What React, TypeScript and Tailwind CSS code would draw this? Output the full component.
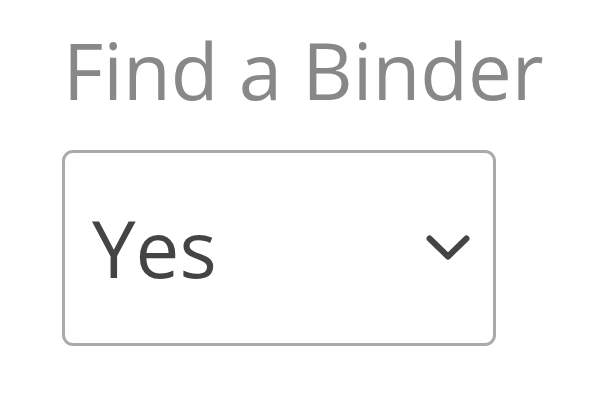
import React from "react";

export default function App() {
  return (
    <div className="w-[600px] h-[400px] bg-white pl-[62px] pt-[31px]" style={{ fontFamily: '"Open Sans", sans-serif' }}>
      <div className="text-[78px] leading-[78px] text-[#888888] pl-[1px]">Find a Binder</div>
      <div className="mt-[41px] w-[434px] h-[196px] border-[3px] border-[#aaaaaa] rounded-[11px] flex items-center justify-between pl-[27px] pr-[23px]">
        <span className="text-[78px] leading-[78px] text-[#444444]">Yes</span>
        <svg width="44" height="26" viewBox="0 0 44 26" fill="none">
          <polyline points="3.5,3.5 22,21.5 40.5,3.5" stroke="#444444" strokeWidth="6" strokeLinecap="round" strokeLinejoin="round" />
        </svg>
      </div>
    </div>
  );
}
